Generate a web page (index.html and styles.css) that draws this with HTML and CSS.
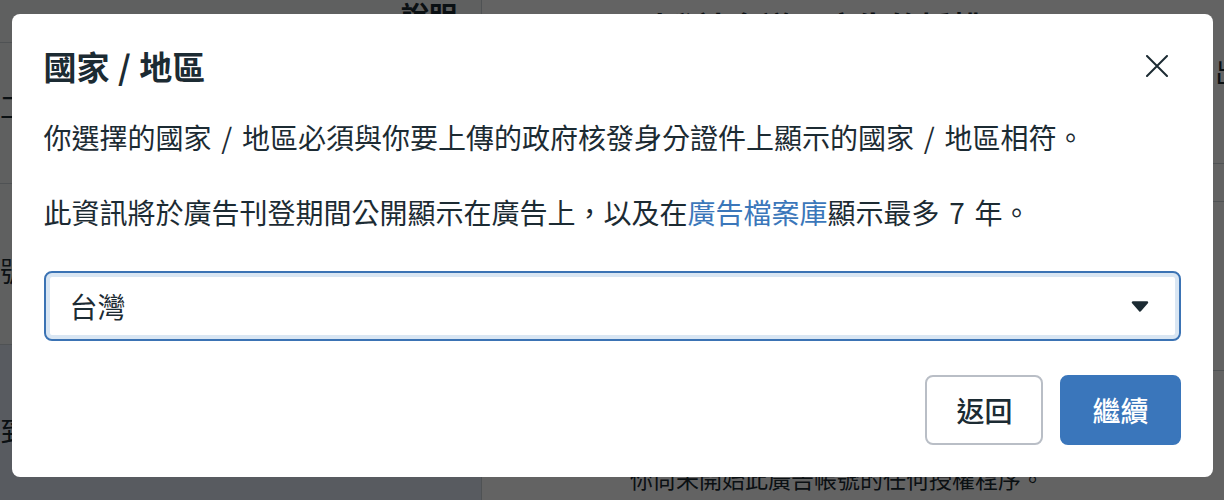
FILE: index.html
```html
<!DOCTYPE html>
<html lang="zh-Hant">
<head>
<meta charset="utf-8">
<title>國家 / 地區</title>
<link rel="stylesheet" href="styles.css">
</head>
<body>
<div class="page">
  <aside class="sidebar">
    <div class="side-head"><span class="help">說明</span></div>
    <div class="side-item item-1"><span>工作資料</span></div>
    <div class="side-item item-2"><span>號碼確認</span></div>
    <div class="side-item item-3"><span>到期日</span></div>
  </aside>
  <main class="main">
    <div class="main-head">
      <h1 class="main-title">刊登社會議題廣告的授權</h1>
      <div class="top-row"><span class="logout">出</span></div>
    </div>
    <div class="row row-a"></div>
    <div class="row row-b"></div>
    <div class="row row-c"><p class="status">你尚未開始此廣告帳號的任何授權程序。</p></div>
  </main>
</div>

<div class="overlay">
  <div class="modal" role="dialog" aria-labelledby="modal-title">
    <div class="modal-head">
      <h2 class="modal-title" id="modal-title">國家 / 地區</h2>
      <button class="close" type="button" aria-label="關閉">
        <svg width="22" height="22" viewBox="0 0 22 22" aria-hidden="true">
          <path d="M1 1 L21 21 M21 1 L1 21" stroke="#1c2b33" stroke-width="2" stroke-linecap="round" fill="none"/>
        </svg>
      </button>
    </div>
    <p class="modal-text first">你選擇的國家 / 地區必須與你要上傳的政府核發身分證件上顯示的國家 / 地區相符。</p>
    <p class="modal-text">此資訊將於廣告刊登期間公開顯示在廣告上，以及在<a class="link" href="#">廣告檔案庫</a>顯示最多 7 年。</p>
    <div class="select" role="combobox" aria-expanded="false" tabindex="0">
      <span class="select-value">台灣</span>
      <svg class="caret" width="18" height="11" viewBox="0 0 18 11" aria-hidden="true">
        <path d="M2 1.5 H16 L9 9.5 Z" fill="#1c2b33" stroke="#1c2b33" stroke-width="2.4" stroke-linejoin="round"/>
      </svg>
    </div>
    <div class="actions">
      <button class="btn btn-secondary" type="button">返回</button>
      <button class="btn btn-primary" type="button">繼續</button>
    </div>
  </div>
</div>
</body>
</html>
```

FILE: styles.css
```css
* {
  box-sizing: border-box;
}

html,
body {
  margin: 0;
  padding: 0;
}

body {
  width: 1224px;
  height: 500px;
  overflow: hidden;
  font-family: "Noto Sans CJK TC", "Noto Sans", sans-serif;
  color: #1c2b33;
  background: #ffffff;
}

/* ---------- page behind the dialog ---------- */
.page {
  display: flex;
  height: 500px;
}

.sidebar {
  width: 482px;
  flex: none;
  display: flex;
  flex-direction: column;
  background: #f5f6f7;
  border-right: 1px solid #cbd2d9;
}

.side-head {
  height: 43px;
  flex: none;
  display: flex;
  justify-content: flex-end;
  padding-right: 24px;
  border-bottom: 1px solid #cbd2d9;
}

.help {
  font-size: 28px;
  font-weight: 700;
  line-height: 30px;
}

.side-item {
  display: flex;
  align-items: center;
  font-size: 28px;
  line-height: 36px;
  border-bottom: 1px solid #cbd2d9;
  white-space: nowrap;
}

.item-1 {
  height: 141px;
  flex: none;
  padding-bottom: 14px;
}

.item-2 {
  height: 161px;
  flex: none;
  padding-top: 12px;
}

.item-3 {
  flex: 1;
  background: #e2eaf7;
  border-bottom: 0;
  padding-top: 14px;
}

.main {
  flex: 1;
  display: flex;
  flex-direction: column;
  padding-left: 150px;
  background: #ffffff;
  overflow: hidden;
}

.main-head {
  height: 163px;
  flex: none;
}

.main-title {
  margin: 0;
  padding-top: 4px;
  font-size: 32px;
  font-weight: 700;
  line-height: 44px;
  white-space: nowrap;
}

.top-row {
  display: flex;
  margin-top: 9px;
  padding-left: 583px;
  font-size: 28px;
  line-height: 28px;
  white-space: nowrap;
}

.row {
  flex: none;
  border-top: 1px solid #cbd2d9;
}

.row-a {
  height: 38px;
}

.row-b {
  height: 169px;
}

.row-c {
  flex: 1;
  border-top: 1px solid #cbd2d9;
  padding-top: 91px;
}

.status {
  margin: 0 0 0 -2px;
  font-size: 23px;
  line-height: 32px;
  white-space: nowrap;
}

/* ---------- dialog ---------- */
.overlay {
  position: fixed;
  inset: 0;
  display: flex;
  justify-content: center;
  align-items: flex-start;
  padding-top: 14px;
  background: rgba(0, 0, 0, 0.61);
}

.modal {
  width: 1201px;
  background: #ffffff;
  border-radius: 8px;
  padding: 28px 32px 32px;
}

.modal-head {
  display: flex;
  align-items: center;
  justify-content: space-between;
  height: 48px;
}

.modal-title {
  margin: 0;
  font-size: 33px;
  font-weight: 700;
  line-height: 40px;
  word-spacing: 1px;
  color: #1c2b33;
}

.close {
  width: 48px;
  height: 48px;
  padding: 0;
  border: 0;
  background: none;
  display: flex;
  align-items: center;
  justify-content: center;
  cursor: pointer;
}

.modal-text {
  margin: 35px 0 0;
  font-size: 28px;
  line-height: 40px;
  word-spacing: 3.5px;
  color: #1c2b33;
  white-space: nowrap;
}

.modal-text.first {
  margin-top: 27px;
}

.link {
  color: #3b77ba;
  text-decoration: none;
}

.select {
  margin-top: 39px;
  height: 70px;
  display: flex;
  align-items: center;
  justify-content: space-between;
  padding: 0 30px 0 24px;
  border: 2px solid #3b73b4;
  border-radius: 8px;
  box-shadow: inset 0 0 0 4px #d9e6f3;
  font-size: 28px;
  line-height: 40px;
  color: #1c2b33;
  outline: none;
}

.caret {
  display: block;
}

.actions {
  display: flex;
  justify-content: flex-end;
  gap: 17px;
  margin-top: 34px;
}

.btn {
  height: 70px;
  border-radius: 8px;
  font-family: inherit;
  font-size: 28px;
  font-weight: 500;
  line-height: 40px;
  cursor: pointer;
}

.btn-secondary {
  padding: 0 29px;
  background: #ffffff;
  border: 2px solid #b9bec6;
  color: #1c2b33;
}

.btn-primary {
  padding: 0 30px;
  background: #3a76bb;
  border: 2px solid #3a76bb;
  color: #ffffff;
}
```
